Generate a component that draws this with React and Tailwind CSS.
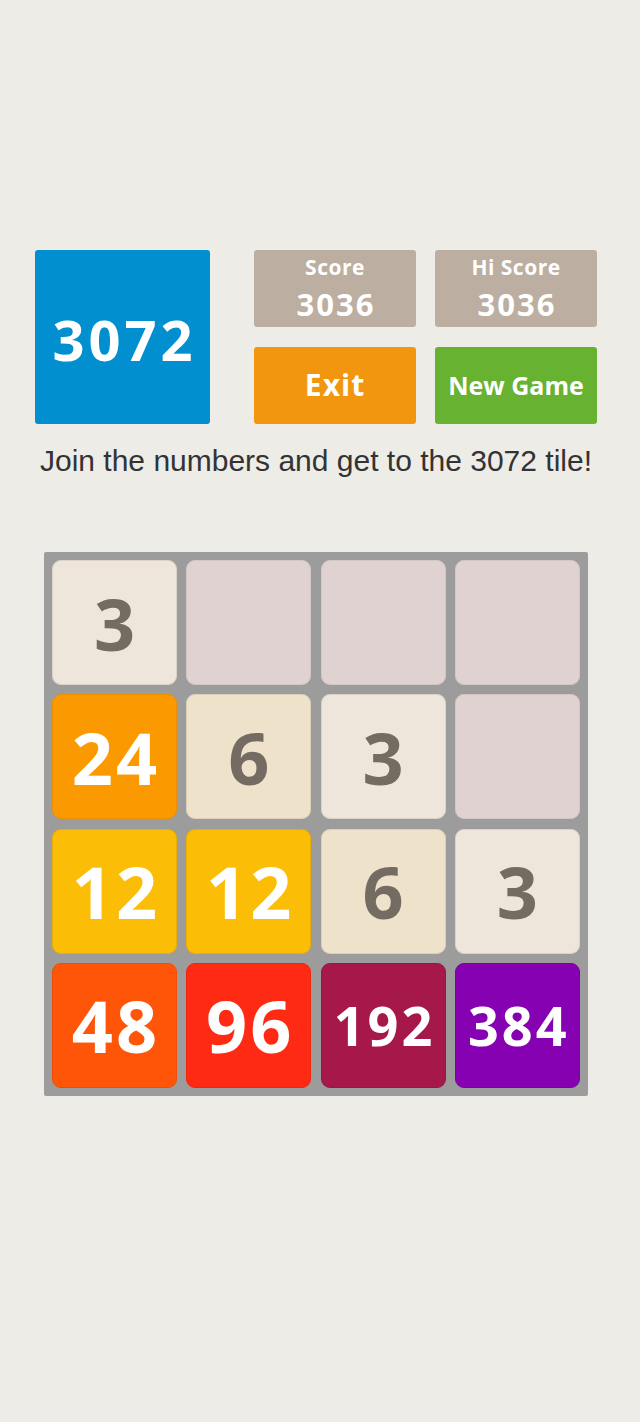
import React from "react";

const tiles = [
  [3, 0, 0, 0],
  [24, 6, 3, 0],
  [12, 12, 6, 3],
  [48, 96, 192, 384],
];

function tileClass(v) {
  switch (v) {
    case 0:
      return "bg-[#e1d2d2] border-[#d5c6c6]";
    case 3:
      return "bg-[#eee5db] border-[#dcd2c8] text-[#746c63]";
    case 6:
      return "bg-[#eee2cb] border-[#dcd0ba] text-[#746c63]";
    case 12:
      return "bg-[#fbbd05] border-[#e9ae05] text-white";
    case 24:
      return "bg-[#fb9a00] border-[#ea8f00] text-white";
    case 48:
      return "bg-[#ff5509] border-[#ec4e08] text-white";
    case 96:
      return "bg-[#ff2a13] border-[#ec2611] text-white";
    case 192:
      return "bg-[#a6184a] border-[#981645] text-white";
    case 384:
      return "bg-[#8601b1] border-[#7a01a3] text-white";
    default:
      return "";
  }
}

function Tile({ v }) {
  const big = v > 0 && v < 100;
  return (
    <div
      className={
        "w-[125px] h-[125px] rounded-[9px] border flex items-center justify-center font-bold leading-none " +
        tileClass(v) +
        (big ? " text-[72px] tracking-[3px] pl-[3px]" : " text-[54px] tracking-[3px] pl-[3px]")
      }
    >
      {v > 0 ? v : ""}
    </div>
  );
}

export default function App() {
  return (
    <div
      className="w-[640px] h-[1422px] bg-[#edece7] overflow-hidden"
      style={{ fontFamily: '"Open Sans", "Noto Sans", sans-serif' }}
    >
      <div className="pt-[250px] pl-[35px] flex">
        <div className="w-[175px] h-[174px] bg-[#028fcf] rounded-[3px] flex items-center justify-center text-white font-bold text-[56px] leading-none tracking-[4px] pl-[4px] pt-[4px]">
          3072
        </div>
        <div className="ml-[44px] grid grid-cols-[162px_162px] gap-x-[19px] gap-y-[19px]">
          <div className="h-[77px] bg-[#bcaea0] rounded-[3px] flex flex-col items-center justify-center text-white font-bold leading-none">
            <div className="text-[21px] tracking-[0.5px]">Score</div>
            <div className="text-[31px] mt-[11px] tracking-[2px] pl-[2px]">3036</div>
          </div>
          <div className="h-[77px] bg-[#bcaea0] rounded-[3px] flex flex-col items-center justify-center text-white font-bold leading-none">
            <div className="text-[21px] tracking-[0.5px]">Hi Score</div>
            <div className="text-[31px] mt-[11px] tracking-[2px] pl-[2px]">3036</div>
          </div>
          <div className="h-[77px] bg-[#f2960f] rounded-[3px] flex items-center justify-center text-white font-bold text-[30px] leading-none tracking-[1px]">
            Exit
          </div>
          <div className="h-[77px] bg-[#68b231] rounded-[3px] flex items-center justify-center text-white font-bold text-[25px] leading-none">
            New Game
          </div>
        </div>
      </div>
      <div
        className="mt-[20px] pr-[8px] text-center text-[30px] leading-[34px] text-[#333333]"
        style={{ fontFamily: '"Liberation Sans", Arial, sans-serif' }}
      >
        Join the numbers and get to the 3072 tile!
      </div>
      <div className="mt-[74px] ml-[44px] w-[544px] h-[544px] bg-[#9c9c9c] rounded-[2px] p-[8px] grid grid-cols-4 gap-[9px]">
        {tiles.flat().map((v, i) => (
          <Tile key={i} v={v} />
        ))}
      </div>
    </div>
  );
}
